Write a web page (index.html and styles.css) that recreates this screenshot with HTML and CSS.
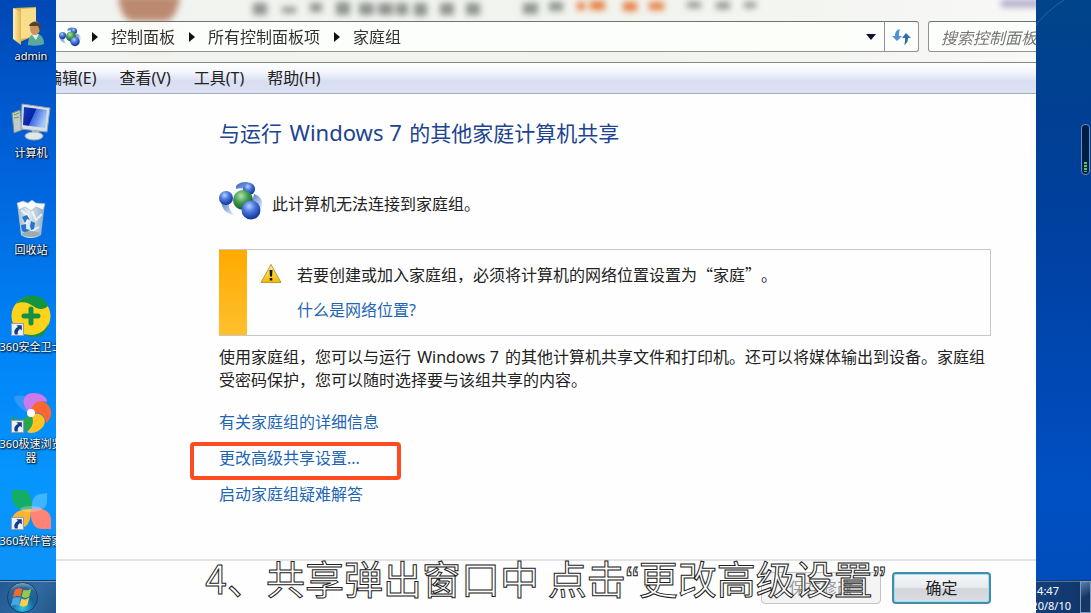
FILE: index.html
```html
<!DOCTYPE html>
<html lang="zh-CN">
<head>
<meta charset="utf-8">
<meta name="viewport" content="width=device-width, initial-scale=1">
<title>家庭组</title>
<link rel="stylesheet" href="styles.css">
</head>
<body>
<svg class="defs" aria-hidden="true">
  <defs>
    <radialGradient id="blueBall" cx=".4" cy=".3" r=".7"><stop offset="0" stop-color="#b5d0ff"/><stop offset=".45" stop-color="#4a78dc"/><stop offset="1" stop-color="#12309a"/></radialGradient>
    <radialGradient id="greenBall" cx=".4" cy=".3" r=".7"><stop offset="0" stop-color="#b2e3a8"/><stop offset=".5" stop-color="#3f9a50"/><stop offset="1" stop-color="#125a2c"/></radialGradient>
    <linearGradient id="swirl" x1="0" y1="0" x2="1" y2="1"><stop offset="0" stop-color="#2c5bb8"/><stop offset="1" stop-color="#dcebfa"/></linearGradient>
    <symbol id="homegroup" viewBox="0 0 44 40">
      <path d="M17 5C22-1 34 0 36 7c1 5-2 7-6 6-2-5-7-7-13-5z" fill="url(#swirl)"/>
      <path d="M2 20c1 8 5 13 14 14-5-3-7-8-6-14z" fill="url(#swirl)" opacity=".8"/>
      <path d="M35 13c7 2 10 8 7 15l-9-6z" fill="url(#swirl)" opacity=".8"/>
      <circle cx="7" cy="17" r="7" fill="url(#blueBall)"/>
      <circle cx="30" cy="8" r="6" fill="url(#blueBall)"/>
      <circle cx="24" cy="19" r="10" fill="url(#greenBall)"/>
      <circle cx="32" cy="29" r="9.500" fill="url(#blueBall)"/>
    </symbol>
    <symbol id="shortcut" viewBox="0 0 12 12">
      <path d="M.5.5h11v11H.5z" fill="#eef3fa" stroke="#8e9db0"/>
      <path d="M5 2h5v5L8.400 5.500C6.500 6.500 6 8 6.300 10.500H3.600C2.300 7.500 3.500 5 6.500 3.600z" fill="#173a85"/>
    </symbol>
  </defs>
</svg>

<div class="desktop">
  <aside class="icons">
    <ul class="icon-list">
      <li><button class="shortcut"><svg viewBox="0 0 40 42"><defs><linearGradient id="fold" x1="0" x2="1"><stop offset="0" stop-color="#fff0b4"/><stop offset="1" stop-color="#e3b94e"/></linearGradient></defs><path d="M3 4l22-1v28L9 38 3 33z" fill="#dcb34d"/><path d="M10 5l15-1v28l-15 3z" fill="#f8dd8a"/><path d="M2 4l8 4v33l-8-6z" fill="url(#fold)"/><path d="M17 41c0-8 3-11 8-11 6 0 8 5 8 10-5 2-11 2-16 1z" fill="#5ba99c"/><path d="M21 31l4 5 3-6z" fill="#e6ede0"/><ellipse cx="24" cy="24" rx="5" ry="7" fill="#c9955c"/><path d="M18 22c1-5 11-6 12 1l-1 4-2-5z" fill="#50422d"/></svg><span>admin</span></button></li>
      <li><button class="shortcut"><svg viewBox="0 0 40 42"><defs><linearGradient id="scr" x1="0" x2="1" y2=".4"><stop offset="0" stop-color="#123ec4"/><stop offset=".5" stop-color="#0821a6"/><stop offset=".52" stop-color="#3a69df"/><stop offset="1" stop-color="#a6c6f7"/></linearGradient></defs><path d="M1 12l8-3 2 20-8 3z" fill="#c1cbc9" stroke="#748490"/><path d="M3 14l5-2M3 17l5-1" stroke="#55a943"/><path d="M11 3l28 4-3 24-26-3z" fill="#d8dfe4" stroke="#8ca0b2"/><path d="M13 6l23 3-2 18-22-3z" fill="url(#scr)"/><path d="M21 29l7 1-1 6h-6z" fill="#aebcc5"/><ellipse cx="23" cy="35" rx="9" ry="4" fill="#e1e8eb" stroke="#9cabb8"/></svg><span>计算机</span></button></li>
      <li><button class="shortcut"><svg viewBox="0 0 40 42"><defs><linearGradient id="bin" x1="0" x2="1"><stop offset="0" stop-color="#a1b9cb"/><stop offset=".4" stop-color="#eef4f7"/><stop offset="1" stop-color="#94acbf"/></linearGradient></defs><path d="M6 5h28l-4 32c-5 4-15 4-20 0z" fill="url(#bin)" opacity=".95"/><path d="M6 5l6-2 5 2 4-3 4 3 9 1-2 6-7-3-5 4-6-4-6 3z" fill="#f8fbfd" stroke="#9caec0" stroke-width=".7"/><path d="M10 12l8 7-5 10m8-16l4 9 6-6m-12 18l9-5" stroke="#fff" stroke-width="2" fill="none" opacity=".7"/><path d="M11 19l5-2 3 5-3-1-2 4zm9 4l4 2-1 6-3 1-1-4zm-10 4l5-1v5l4 1-4 3-4-2z" fill="#2672cb"/><ellipse cx="20" cy="36" rx="9" ry="3" fill="#9caab1"/></svg><span>回收站</span></button></li>
      <li><button class="shortcut"><svg viewBox="0 0 40 42"><circle cx="20" cy="21" r="19.500" fill="#ffd21b"/><path d="M5 9C16-5 34 0 37 11c-4 4-10 4-15 0C17 7 10 6 5 9zM14 39c11 3 20-2 23-10-2 16-17 16-23 10z" fill="#15943f"/><path d="M20 14v14M13 21h14" stroke="#139044" stroke-width="5" stroke-linecap="round"/><use href="#shortcut" x="0" y="28" width="13" height="13"/></svg><span>360安全卫士</span></button></li>
      <li><button class="shortcut"><svg viewBox="0 0 40 42"><path d="M20 22C10 19 3 10 3 5c9-5 19 1 17 17z" fill="#3198f5"/><path d="M20 22C8 12 12 1 22 1c9 0 15 5 14 9-8-2-14 3-16 12z" fill="#cc79ec"/><path d="M20 22c0-12 9-15 15-11 8 6 6 16 0 20-1-8-7-12-15-9z" fill="#fb6632"/><path d="M20 22c10-2 16 4 13 11-3 6-12 10-17 7 6-6 7-11 4-18z" fill="#ffc41f"/><path d="M20 22c4 9 1 16-7 17C5 38 0 31 0 24c6 5 13 5 20-2z" fill="#27a650"/><circle cx="20" cy="21" r="4" fill="#fff"/><use href="#shortcut" x="0" y="28" width="13" height="13"/></svg><span>360极速浏览<br>器</span></button></li>
      <li><button class="shortcut"><svg viewBox="0 0 40 42"><path d="M1 1h10c7 0 10 6 10 19H11C5 20 1 14 1 8z" fill="#14ad66"/><path d="M36 4v8c0 7-5 10-15 9-1-11 3-16 9-16z" fill="#40b4ff"/><path d="M20 20c0 13-4 19-11 19H1v-7c0-8 7-12 19-12z" fill="#ffb431"/><path d="M20 20c13-2 20 3 20 11v9H31c-8 0-12-7-11-20z" fill="#ff8376"/><ellipse cx="20" cy="20" rx="11" ry="3" fill="#fff" opacity=".25"/><use href="#shortcut" x="0" y="28" width="13" height="13"/></svg><span>360软件管家</span></button></li>
    </ul>
    <div class="taskbar">
      <button class="start" aria-label="开始"><svg viewBox="0 0 34 34"><defs><radialGradient id="orb" cx=".5" cy=".85" r=".9"><stop offset="0" stop-color="#30c5ef"/><stop offset=".45" stop-color="#14649c"/><stop offset=".75" stop-color="#2e6494"/><stop offset="1" stop-color="#a7c2d6"/></radialGradient></defs><circle cx="17" cy="17" r="15.500" fill="url(#orb)" stroke="#173d64"/><path d="M9 9c3-2 5-2 8-1l-2 8c-3-1-5-1-8 1z" fill="#ee6a2d"/><path d="M18 9c3 1 5 1 8-1l-2 8c-3 2-5 2-8 0z" fill="#96c94b"/><path d="M7 18c3-2 5-1 8-1l-2 8c-3-1-5-1-8 1z" fill="#4ba6e9"/><path d="M16 18c3 2 5 1 8-1l-2 8c-3 2-5 2-8 0z" fill="#ffcf45"/></svg></button>
    </div>
  </aside>

  <main class="window">
    <header class="glass">
      <svg class="behind" aria-hidden="true" width="980" height="62">
        <defs><filter id="soft" x="-20%" y="-100%" width="140%" height="300%"><feGaussianBlur stdDeviation="3"/></filter></defs>
        <g filter="url(#soft)">
          <path d="M62-4h62c-2 16-8 25-16 26H78c-9-1-14-10-16-26z" fill="#bb8970"/>
          <path d="M72 20h44v32H72z" fill="#ecd9d0" opacity=".5"/>
          <g fill="#8f938f"><path d="M197 3h14v12h-14zM226 7h14v6h-14zM254 3h12v9h-12zM280 2h14v13h-14zM303 3h15v12h-15zM322 3h15v12h-15zM340 3h12v12h-12zM358 3h13v13h-13zM384 3h14v12h-14zM410 3h14v12h-14z"/><path d="M467 3h15v11h-15zM493 2h14v9h-14zM631 2h14v6h-14zM660 2h14v7h-14zM688 2h12v6h-12z"/></g>
          <path d="M521 2h8v8h-8zM534 1h15v9h-15zM567 2h14v9h-14zM593 2h15v8h-15z" fill="#e77d43"/>
          <path d="M945 0h40v7h-40z" fill="#aaa5c4"/>
        </g>
      </svg>
      <div class="bar">
        <nav class="address" aria-label="地址">
          <svg class="address-icon"><use href="#homegroup"/></svg>
          <i class="arrow"></i><a href="#">控制面板</a>
          <i class="arrow"></i><a href="#">所有控制面板项</a>
          <i class="arrow"></i><a href="#">家庭组</a>
          <button class="drop" aria-label="以前的位置"></button>
        </nav>
        <button class="refresh" aria-label="刷新"><svg viewBox="0 0 20 18"><path d="M8 1C4 2 3 5 3 8H0l5 5 5-5H7c0-3 0-5 1-7z" fill="#4c93d8"/><path d="M12 17c4-2 4-5 4-7h3l-5-5-4 5h3c0 3 0 5-1 7z" fill="#326fae"/></svg></button>
        <input class="search" type="text" placeholder="搜索控制面板" aria-label="搜索控制面板">
      </div>
    </header>
    <nav class="menu" aria-label="菜单">
      <button>编辑(E)</button><button>查看(V)</button><button>工具(T)</button><button>帮助(H)</button>
    </nav>

    <section class="content">
      <h1>与运行 <span class="product">Windows 7</span> 的其他家庭计算机共享</h1>
      <div class="status"><svg><use href="#homegroup"/></svg><p>此计算机无法连接到家庭组。</p></div>
      <div class="alert">
        <svg viewBox="0 0 22 21"><defs><linearGradient id="warn" x2="0" y2="1"><stop offset="0" stop-color="#fff087"/><stop offset="1" stop-color="#f5b600"/></linearGradient></defs><path d="M11 1.500L21 19.500H1z" fill="url(#warn)" stroke="#b99a36" stroke-linejoin="round"/><path d="M9.500 7h3l-.5 6.500h-2zM9.700 15h2.600v2.500H9.700z" fill="#17150d"/></svg>
        <div class="alert-text">
          <p>若要创建或加入家庭组，必须将计算机的网络位置设置为“家庭”。</p>
          <a href="#">什么是网络位置?</a>
        </div>
      </div>
      <p class="about">使用家庭组，您可以与运行 <span class="product">Windows 7</span> 的其他计算机共享文件和打印机。还可以将媒体输出到设备。家庭组<br>受密码保护，您可以随时选择要与该组共享的内容。</p>
      <ul class="links">
        <li><a href="#">有关家庭组的详细信息</a></li>
        <li class="marked"><a href="#">更改高级共享设置...</a></li>
        <li><a href="#">启动家庭组疑难解答</a></li>
      </ul>
    </section>

    <footer class="actions">
      <button class="save" disabled>保存修改</button>
      <button class="ok">确定</button>
    </footer>
  </main>

  <aside class="right">
    <svg class="streak" viewBox="0 0 30 26" aria-hidden="true"><path d="M0 25Q12 10 28 0" stroke="#2c60a4" fill="none"/></svg>
    <div class="meter"><i></i></div>
    <div class="taskbar tray">
      <time class="clock" datetime="2020-08-10T14:47">14:47<br>2020/8/10</time>
      <button class="peek" aria-label="显示桌面"></button>
    </div>
  </aside>

  <p class="caption">4、共享弹出窗口中 点击<span class="quote">“</span>更改高级设置<span class="quote">”</span></p>
</div>
</body>
</html>
```
FILE: styles.css
```css
*, *::before { box-sizing: border-box; }

body {
  margin: 0;
  font: 16px/24px "Noto Sans", "Noto Sans CJK SC", sans-serif;
  color: #222;
}

h1, p, ul { margin: 0; padding: 0; font-weight: 400; }
ul { list-style: none; }
button { padding: 0; border: 0; background: none; font: inherit; color: inherit; }
a { color: #1e66b4; text-decoration: none; }
svg { display: block; flex: none; }
.defs { position: absolute; width: 0; height: 0; }

.desktop {
  position: relative;
  display: grid;
  grid-template-columns: 56px minmax(0, 1fr) 55px;
  min-height: 100vh;
  overflow: hidden;
}

/* Desktop icons */
.icons {
  display: flex;
  flex-direction: column;
  justify-content: space-between;
  overflow: hidden;
  background: linear-gradient(#0048b4, #0060d8 25%, #0083f6 55%, #0796ff 80%, #1090f4);
}
.icon-list { width: 62px; padding-top: 4px; }
.icon-list li { height: 97px; }
.icon-list li:last-child { height: 62px; }
.shortcut {
  display: flex;
  flex-direction: column;
  align-items: center;
  gap: 3px;
  width: 100%;
  color: #fff;
  font-size: 11px;
  line-height: 14px;
  white-space: nowrap;
  text-shadow: 1px 1px 2px #000, 0 0 2px #000;
}
.shortcut svg { width: 40px; height: 42px; }

.taskbar {
  height: 33px;
  border-top: 1px solid #173c68;
  background: linear-gradient(120deg, #235a91, #2f6aa2 60%, #245487);
  box-shadow: inset 0 1px #6f9bc5;
}
.start { margin-left: 6px; }
.start svg { width: 33px; height: 33px; }

/* Window */
.window { display: flex; flex-direction: column; min-width: 0; background: #fefefe; overflow: hidden; }
.glass {
  position: relative;
  overflow: hidden;
  padding: 21px 0 10px;
  border-bottom: 1px solid #858882;
  background: linear-gradient(90deg, #f1f3f0, #f1f4ee 60%, #f8f8f7);
}
.behind { position: absolute; inset: 0; }
.bar { position: relative; display: flex; height: 31px; }
.address, .refresh, .search {
  border: 1px solid #90938f;
  border-top-color: #6f736f;
  background: rgba(253, 255, 252, .85);
}
.address { display: flex; flex: 1; align-items: center; min-width: 0; border-left: 0; padding-left: 3px; white-space: nowrap; }
.address a { color: #333; }
.address-icon { width: 22px; height: 20px; margin-right: 11px; }
.arrow { border: 5px solid transparent; border-left: 6px solid #111; border-right: 0; margin-right: 13px; }
.address a + .arrow { margin-left: 14px; }
.drop { margin: 0 8px 0 auto; border: 5px solid transparent; border-top: 6px solid #101235; border-bottom: 0; }
.refresh { display: grid; place-items: center; width: 34px; border-left: 0; border-radius: 0 3px 3px 0; }
.refresh svg { width: 20px; height: 18px; }
.search { flex: none; width: 124px; margin: 0 -16px 0 9px; padding: 0 0 0 12px; border-radius: 3px; font: italic 16px "Noto Sans CJK SC", sans-serif; }
.search::placeholder { color: #777; opacity: 1; }

.menu {
  display: flex;
  gap: 23px;
  height: 31px;
  padding-bottom: 1px;
  border-bottom: 1px solid #a3adbd;
  background: linear-gradient(#fff, #f4f5fc 30%, #d9dff2 60%, #dce2f4);
}
.menu button { flex: none; }
.menu button:first-child { margin-left: -10px; }

.content { flex: 1; padding: 23px 45px 24px 163px; }
h1 { font-size: 21px; line-height: 30px; color: #20438f; }
.product { margin: 0 2px; }
h1 .product { font-size: 22px; }
.status { display: flex; align-items: center; gap: 9px; margin: 31px 0 26px; height: 44px; }
.status svg { width: 44px; height: 40px; }
.status p { padding-top: 6px; }
.alert {
  display: flex;
  gap: 15px;
  padding: 12px 0 13px 41px;
  border: 1px solid #c6c6c6;
  border-left: 0;
  background: linear-gradient(#ffaa00, #ffc02e) left / 28px 100% no-repeat;
}
.alert svg { width: 22px; height: 21px; margin-top: 1px; }
.alert p { margin-bottom: 12px; font-family: "Noto Sans CJK SC", sans-serif; text-spacing-trim: space-all; }
.about { margin: 10px -8px 18px 0; line-height: 23px; }
.links { display: grid; gap: 12px; }
.marked { position: relative; }
.marked::before {
  content: "";
  position: absolute;
  top: -4px;
  left: -29px;
  width: 211px;
  height: 38px;
  border: 4px solid #ff4b1f;
  border-radius: 4px;
  pointer-events: none;
}

.actions {
  display: flex;
  justify-content: flex-end;
  gap: 11px;
  padding: 11px 45px 9px;
  border-top: 2px solid #e2e2e2;
}
.actions button { height: 32px; border-radius: 4px; }
.save { width: 120px; border: 1px solid #c4c4c4; background: #f4f4f4; color: #999; }
.ok {
  width: 99px;
  border: 2px solid #438cab;
  background: linear-gradient(#f5f7f8, #e7eaed 50%, #d2d6dc 52%, #d9dde2);
  box-shadow: inset 0 0 0 1px #9fe0f5;
}

/* Right edge of the desktop */
.right {
  display: flex;
  flex-direction: column;
  overflow: hidden;
  background: linear-gradient(#00458b, #003f93 20%, #0042a6 45%, #0050c3 80%, #004bb9);
}
.streak { width: 30px; height: 26px; }
.meter {
  display: flex;
  align-items: flex-end;
  align-self: flex-end;
  width: 9px;
  height: 51px;
  margin: 98px 1px auto 0;
  padding: 2px;
  border: 1px solid #6a8fbd;
  border-radius: 4px;
  background: #031c44;
}
.meter i { width: 100%; height: 10px; background: repeating-linear-gradient(#55c169 0 2px, #0b3b3a 2px 3px); }
.tray { display: flex; justify-content: flex-end; background: linear-gradient(90deg, #153f7c, #0f3468); box-shadow: inset 0 1px #4b75a8; }
.clock { padding: 2px 9px 0 0; font-size: 11px; line-height: 15px; text-align: center; white-space: nowrap; color: #fff; }
.peek { flex: none; width: 11px; border: 1px solid #7d9cc2; background: linear-gradient(150deg, #5c80ad, #143766 50%); }

/* Caption laid over the whole scene */
.caption {
  position: absolute;
  left: 0;
  right: 0;
  bottom: 4px;
  font-size: 39px;
  line-height: 56px;
  text-align: center;
  white-space: nowrap;
  color: #fff;
  font-family: "Noto Sans CJK SC", sans-serif;
  -webkit-text-stroke: 1px #222;
  pointer-events: none;
}
.quote { font-family: "Liberation Sans", sans-serif; }
```
